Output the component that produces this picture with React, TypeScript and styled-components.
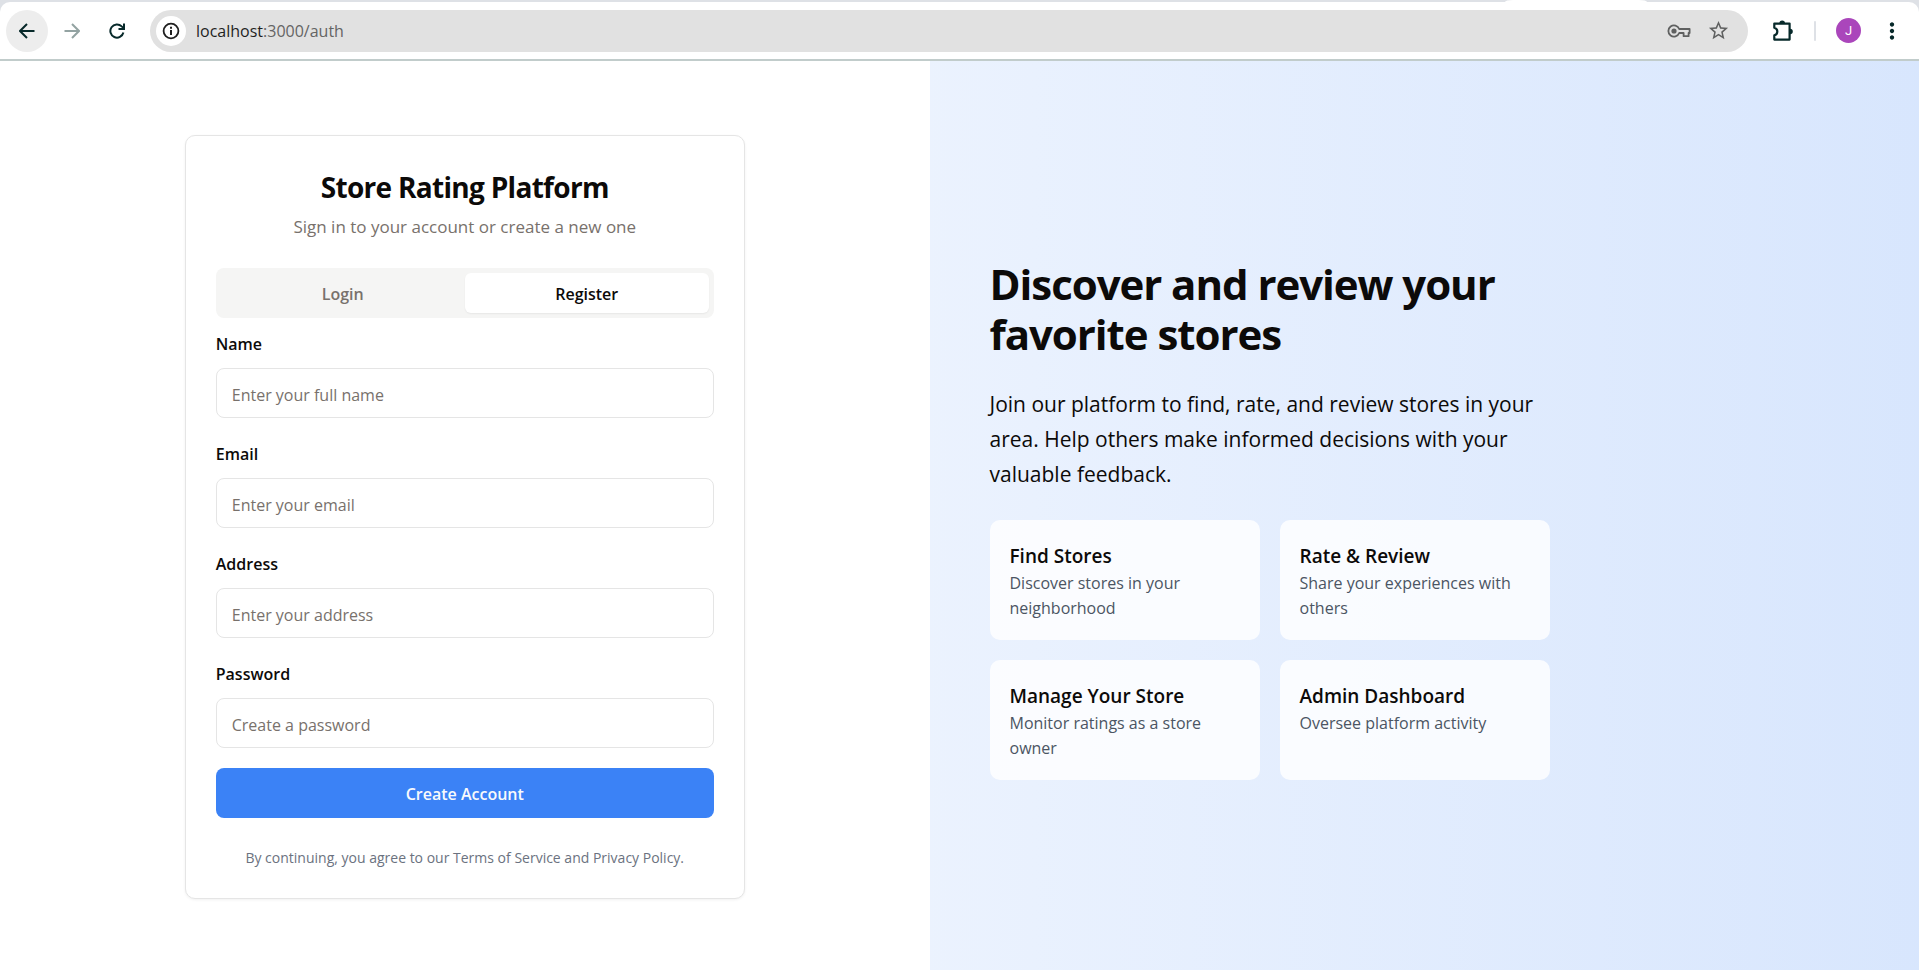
import React, { useState } from "react";
import styled, { createGlobalStyle } from "styled-components";
import { MdMoreVert, MdStarBorder } from "react-icons/md";

const GlobalStyle = createGlobalStyle`
  *, *::before, *::after { box-sizing: border-box; }
  body {
    margin: 0;
    background: #ffffff;
    color: #0c0a09;
    font-family: "Open Sans", "Noto Sans", sans-serif;
    font-size: 16px;
    line-height: 25px;
  }
  button, input { font: inherit; color: inherit; }
  h1, h2, h3, p { margin: 0; }
`;

const Page = styled.div`
  display: flex;
  flex-direction: column;
  min-height: 100vh;
`;

/* Browser chrome */

const Chrome = styled.header`
  background: #dee1e6;
  border-bottom: 2px solid #c1cccb;
`;

const TabStrip = styled.div`
  display: flex;
  justify-content: flex-end;
  height: 2px;
  padding-right: 272px;
`;

const ActiveTab = styled.div`
  width: 142px;
  background: #ffffff;
  border-radius: 8px 8px 0 0 / 2px 2px 0 0;
`;

const Toolbar = styled.div`
  display: flex;
  align-items: center;
  height: 57px;
  padding: 0 6px;
  background: #ffffff;
  border-radius: 10px 10px 0 0;
`;

const NavGroup = styled.nav`
  display: flex;
  gap: 3px;
  margin-right: 12px;
`;

const IconButton = styled.button<{ $filled?: boolean; $muted?: boolean }>`
  display: flex;
  align-items: center;
  justify-content: center;
  width: 42px;
  height: 42px;
  padding: 0;
  border: 0;
  border-radius: 50%;
  background: ${(p) => (p.$filled ? "#ededed" : "transparent")};
  color: ${(p) => (p.$muted ? "#93a3a2" : "#07292a")};
`;

const AddressBar = styled.div`
  display: flex;
  flex: 1;
  align-items: center;
  min-width: 0;
  height: 42px;
  padding: 0 18px 0 6px;
  border-radius: 21px;
  background: #e1e1e1;
`;

const SiteInfo = styled.button`
  display: flex;
  align-items: center;
  justify-content: center;
  width: 30px;
  height: 30px;
  padding: 0;
  border: 0;
  border-radius: 50%;
  background: #ffffff;
  color: #1f1f1f;
`;

const Url = styled.div`
  flex: 1;
  min-width: 0;
  margin-left: 10px;
  padding-top: 2px;
  color: #1f1f1f;
  white-space: nowrap;
  overflow: hidden;
`;

const UrlPath = styled.span`
  color: #646464;
`;

const BarButton = styled.button`
  display: flex;
  align-items: center;
  justify-content: center;
  width: 24px;
  height: 30px;
  padding: 0;
  border: 0;
  background: transparent;
  color: #5f6060;
  & + & { margin-left: 15px; }
`;

const Actions = styled.div`
  display: flex;
  align-items: center;
  gap: 10px;
  margin-left: 14px;
`;

const Divider = styled.span`
  width: 2px;
  height: 20px;
  margin-right: 10px;
  border-radius: 1px;
  background: #dee1e6;
`;

const Avatar = styled.button`
  width: 25px;
  height: 25px;
  padding: 0;
  border: 0;
  border-radius: 50%;
  background: #aa46bb;
  color: #ffffff;
  font-family: Roboto, sans-serif;
  font-size: 13px;
  line-height: 25px;
`;

/* Page panels */

const Main = styled.main`
  display: flex;
  flex: 1;
`;

const FormPanel = styled.section`
  display: flex;
  flex: 1 1 0;
  align-items: center;
  justify-content: center;
  padding: 33px 30px 30px;
`;

const PromoPanel = styled.section`
  display: flex;
  flex: 1 1 0;
  flex-direction: column;
  justify-content: center;
  padding: 63px 60px 60px;
  background: linear-gradient(to right, rgba(59, 130, 246, 0.1), rgba(59, 130, 246, 0.2));
`;

const Card = styled.div`
  width: 100%;
  max-width: 560px;
  padding: 30px;
  border: 1px solid #e5e5e5;
  border-radius: 10px;
  background: #ffffff;
  box-shadow: 0 1px 3px rgba(0, 0, 0, 0.06);
`;

const CardHeader = styled.div`
  display: flex;
  flex-direction: column;
  gap: 7px;
  padding: 1px 0 29px;
  text-align: center;
`;

const Title = styled.h1`
  font-size: 28px;
  font-weight: 700;
  line-height: 40px;
  letter-spacing: -0.025em;
`;

const Subtitle = styled.p`
  color: #78716c;
  font-size: 17px;
`;

const Tabs = styled.div`
  display: grid;
  grid-template-columns: 1fr 1fr;
  height: 50px;
  padding: 5px;
  border-radius: 8px;
  background: #f5f5f4;
`;

const Tab = styled.button<{ $active: boolean }>`
  padding: 2px 0 0;
  border: 0;
  border-radius: 6px;
  background: ${(p) => (p.$active ? "#ffffff" : "transparent")};
  color: ${(p) => (p.$active ? "#0c0a09" : "#78716c")};
  font-weight: 600;
  box-shadow: ${(p) => (p.$active ? "0 1px 2px rgba(0, 0, 0, 0.06)" : "none")};
`;

const Form = styled.form`
  display: flex;
  flex-direction: column;
  gap: 20px;
  margin-top: 10px;
`;

const Field = styled.div`
  display: flex;
  flex-direction: column;
  gap: 10px;
`;

const Label = styled.label`
  padding-top: 2px;
  font-weight: 600;
  line-height: 28px;
`;

const TextInput = styled.input`
  width: 100%;
  height: 50px;
  padding: 3px 15px 0;
  border: 1px solid #e5e5e5;
  border-radius: 8px;
  background: #ffffff;
  &::placeholder { color: #78716c; opacity: 1; }
`;

const SubmitButton = styled.button`
  height: 50px;
  padding: 3px 0 0;
  border: 0;
  border-radius: 8px;
  background: #3b82f6;
  color: #f8fafc;
  font-weight: 600;
`;

const Terms = styled.p`
  margin-top: 30px;
  color: #6b7280;
  font-size: 14px;
  line-height: 20px;
  text-align: center;
`;

const Promo = styled.div`
  display: flex;
  flex-direction: column;
  gap: 28px;
  max-width: 560px;
`;

const Headline = styled.h2`
  padding-top: 4px;
  font-size: 42px;
  font-weight: 700;
  line-height: 50px;
  letter-spacing: -0.025em;
`;

const Lead = styled.p`
  font-size: 21px;
  line-height: 35px;
`;

const Features = styled.div`
  display: grid;
  grid-template-columns: 1fr 1fr;
  gap: 20px;
`;

const Feature = styled.article`
  min-height: 120px;
  padding: 21px 20px 19px;
  border-radius: 10px;
  background: rgba(255, 255, 255, 0.8);
`;

const FeatureTitle = styled.h3`
  font-size: 19px;
  font-weight: 600;
  line-height: 30px;
`;

const FeatureText = styled.p`
  color: #4b5563;
`;

/* Icons */

const Arrow = ({ flip }: { flip?: boolean }) => (
  <svg width="16" height="16" viewBox="0 0 16 16" fill="none" stroke="currentColor" strokeWidth="2" aria-hidden="true">
    {flip ? <path d="M0.5 8H14.5M8 1l7 7-7 7" /> : <path d="M15.5 8H1.5M8 1L1 8l7 7" />}
  </svg>
);

const Reload = () => (
  <svg width="16" height="16" viewBox="0 0 16 16" fill="none" stroke="currentColor" strokeWidth="2" aria-hidden="true">
    <path d="M14.4 9.5A6.6 6.6 0 1 1 12.7 3.4L15 5.6" />
    <path d="M15 0.5V6H9.5" />
  </svg>
);

const InfoIcon = () => (
  <svg width="18" height="18" viewBox="0 0 18 18" fill="none" stroke="currentColor" strokeWidth="2" aria-hidden="true">
    <circle cx="9" cy="9" r="7.4" strokeWidth="1.8" />
    <path d="M9 8v5M9 4.8v2" />
  </svg>
);

const KeyIcon = () => (
  <svg width="24" height="14" viewBox="0 0 24 14" fill="none" stroke="currentColor" strokeWidth="1.8" aria-hidden="true">
    <path d="M12.2 5A5.6 5.6 0 1 0 12.2 9H16.6V12.2H21.6V9H22.6V5Z" strokeLinejoin="round" />
    <circle cx="7" cy="7" r="2.6" fill="currentColor" stroke="none" />
  </svg>
);

const PuzzleIcon = () => (
  <svg width="22" height="22" viewBox="0 0 22 22" fill="none" stroke="currentColor" strokeWidth="2.2" strokeLinejoin="round" aria-hidden="true">
    <path d="M2.3 3.6H17.6V19.6H2.3V15.4A3.9 3.9 0 0 0 2.3 7.8Z" />
    <path d="M7.4 3.2a2.8 2.8 0 0 1 5.6 0ZM18 8.7a2.8 2.8 0 0 1 0 5.6Z" fill="currentColor" stroke="none" />
  </svg>
);

const fields = [
  { id: "name", label: "Name", type: "text", placeholder: "Enter your full name" },
  { id: "email", label: "Email", type: "email", placeholder: "Enter your email" },
  { id: "address", label: "Address", type: "text", placeholder: "Enter your address" },
  { id: "password", label: "Password", type: "password", placeholder: "Create a password" },
];

const features = [
  { title: "Find Stores", text: "Discover stores in your neighborhood" },
  { title: "Rate & Review", text: "Share your experiences with others" },
  { title: "Manage Your Store", text: "Monitor ratings as a store owner" },
  { title: "Admin Dashboard", text: "Oversee platform activity" },
];

const tabs = ["Login", "Register"];

function BrowserBar() {
  return (
    <Chrome>
      <TabStrip>
        <ActiveTab />
      </TabStrip>
      <Toolbar>
        <NavGroup aria-label="Browser">
          <IconButton $filled aria-label="Back"><Arrow /></IconButton>
          <IconButton $muted aria-label="Forward"><Arrow flip /></IconButton>
          <IconButton aria-label="Reload"><Reload /></IconButton>
        </NavGroup>
        <AddressBar>
          <SiteInfo aria-label="Site information"><InfoIcon /></SiteInfo>
          <Url role="textbox" tabIndex={0} aria-label="Address">
            localhost<UrlPath>:3000/auth</UrlPath>
          </Url>
          <BarButton aria-label="Passwords"><KeyIcon /></BarButton>
          <BarButton aria-label="Bookmark"><MdStarBorder size={23} /></BarButton>
        </AddressBar>
        <Actions>
          <IconButton aria-label="Extensions"><PuzzleIcon /></IconButton>
          <Divider />
          <Avatar aria-label="Profile">J</Avatar>
          <IconButton aria-label="Menu"><MdMoreVert size={26} /></IconButton>
        </Actions>
      </Toolbar>
    </Chrome>
  );
}

export default function App() {
  const [active, setActive] = useState("Register");
  return (
    <>
      <GlobalStyle />
      <Page>
        <BrowserBar />
        <Main>
          <FormPanel>
            <Card>
              <CardHeader>
                <Title>Store Rating Platform</Title>
                <Subtitle>Sign in to your account or create a new one</Subtitle>
              </CardHeader>
              <Tabs role="tablist">
                {tabs.map((tab) => (
                  <Tab
                    key={tab}
                    type="button"
                    role="tab"
                    aria-selected={tab === active}
                    $active={tab === active}
                    onClick={() => setActive(tab)}
                  >
                    {tab}
                  </Tab>
                ))}
              </Tabs>
              <Form onSubmit={(e) => e.preventDefault()}>
                {fields.map((field) => (
                  <Field key={field.id}>
                    <Label htmlFor={field.id}>{field.label}</Label>
                    <TextInput id={field.id} type={field.type} placeholder={field.placeholder} />
                  </Field>
                ))}
                <SubmitButton type="submit">Create Account</SubmitButton>
              </Form>
              <Terms>By continuing, you agree to our Terms of Service and Privacy Policy.</Terms>
            </Card>
          </FormPanel>
          <PromoPanel>
            <Promo>
              <Headline>Discover and review your favorite stores</Headline>
              <Lead>
                Join our platform to find, rate, and review stores in your area. Help others make
                informed decisions with your valuable feedback.
              </Lead>
              <Features>
                {features.map((feature) => (
                  <Feature key={feature.title}>
                    <FeatureTitle>{feature.title}</FeatureTitle>
                    <FeatureText>{feature.text}</FeatureText>
                  </Feature>
                ))}
              </Features>
            </Promo>
          </PromoPanel>
        </Main>
      </Page>
    </>
  );
}
